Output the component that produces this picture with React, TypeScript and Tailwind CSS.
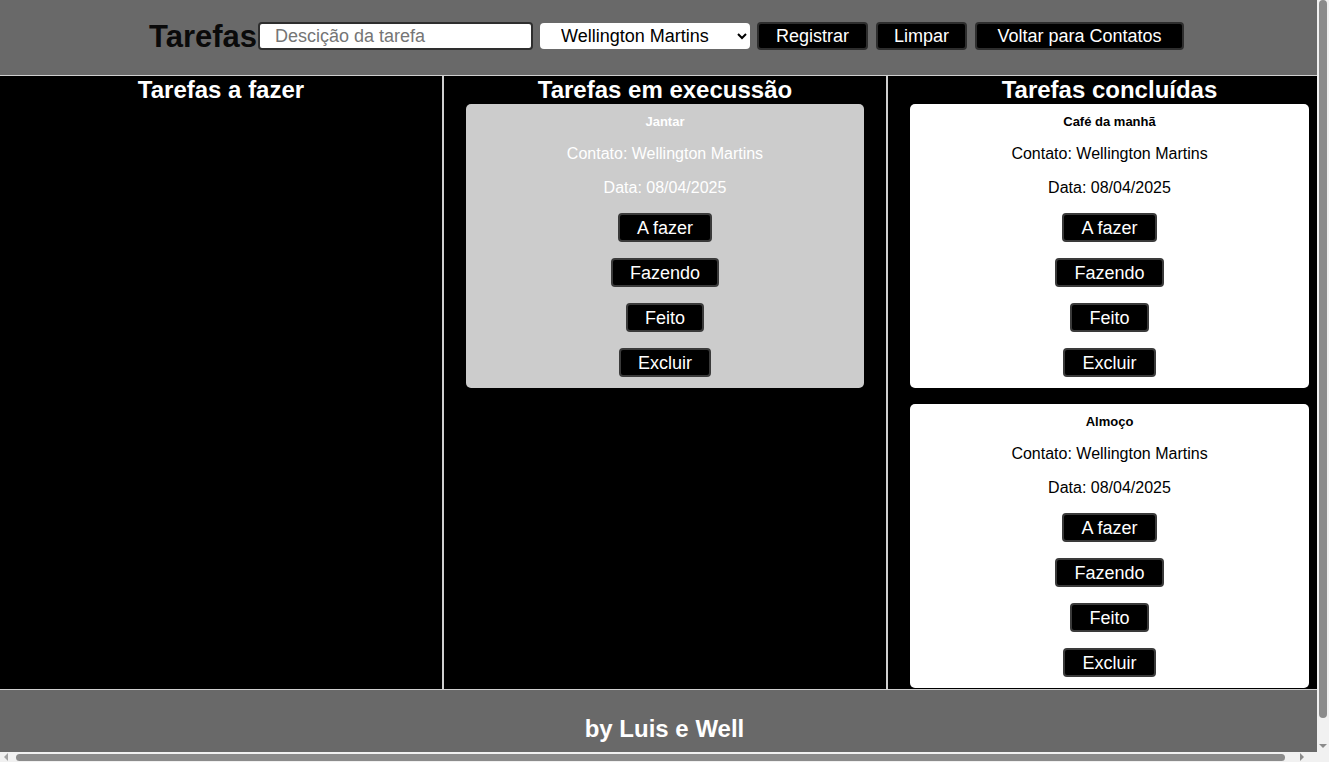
import React from "react";

type Task = { title: string; contato: string; data: string };

const font = { fontFamily: '"Liberation Sans", Arial, sans-serif' };

function TaskButton({ label }: { label: string }) {
  return (
    <button className="h-[29px] rounded-[4px] border-2 border-[#3a3a3a] bg-black px-[17px] text-[18px] leading-none text-white">
      {label}
    </button>
  );
}

function Card({ task, variant }: { task: Task; variant: "gray" | "white" }) {
  const cls =
    variant === "gray"
      ? "bg-[#cccccc] text-white"
      : "bg-white text-black";
  return (
    <div className={`mx-auto flex w-[90%] flex-col items-center rounded-[5px] pt-[10px] pb-[11px] ${cls}`}>
      <h3 className="text-[13px] font-bold leading-[15px]">{task.title}</h3>
      <p className="mt-4 text-[16px] leading-[18px]">Contato: {task.contato}</p>
      <p className="mt-4 text-[16px] leading-[18px]">Data: {task.data}</p>
      <div className="mt-4 flex flex-col items-center gap-4">
        <TaskButton label="A fazer" />
        <TaskButton label="Fazendo" />
        <TaskButton label="Feito" />
        <TaskButton label="Excluir" />
      </div>
    </div>
  );
}

function Column({ title, border, children }: { title: string; border: string; children?: React.ReactNode }) {
  return (
    <div className={`flex flex-col gap-4 border-[#cfcfcf] pb-[1px] ${border}`}>
      <h2 className="-mb-4 h-[28px] text-center text-[24px] font-bold leading-[28px] text-white">{title}</h2>
      {children}
    </div>
  );
}

function FakeScrollbars() {
  return (
    <>
      <div className="fixed top-0 right-0 flex h-[752px] w-[12px] flex-col items-center bg-[#f1f1f1]">
        <svg width="8" height="6" viewBox="0 0 8 6" className="mt-[3px] shrink-0">
          <path d="M0 5 L4 1 L8 5 Z" fill="#a3a3a3" />
        </svg>
        <div className="mt-[-9px] h-[718px] w-[8px] rounded-[4px] bg-[#8b8b8b]" />
        <div className="flex-1" />
        <svg width="8" height="6" viewBox="0 0 8 6" className="mb-[3px] shrink-0">
          <path d="M0 1 L4 5 L8 1 Z" fill="#8b8b8b" />
        </svg>
      </div>
      <div className="fixed bottom-0 left-0 flex h-[10px] w-[1317px] items-center bg-[#f1f1f1]">
        <svg width="6" height="8" viewBox="0 0 6 8" className="ml-[3px] shrink-0">
          <path d="M5 0 L1 4 L5 8 Z" fill="#a3a3a3" />
        </svg>
        <div className="ml-[7px] h-[7px] w-[1269px] rounded-[4px] bg-[#8b8b8b]" />
        <div className="flex-1" />
        <svg width="6" height="8" viewBox="0 0 6 8" className="mr-[12px] shrink-0">
          <path d="M1 0 L5 4 L1 8 Z" fill="#8b8b8b" />
        </svg>
      </div>
      <div className="fixed right-0 bottom-0 h-[10px] w-[12px] bg-[#f1f1f1]" />
    </>
  );
}

export default function App() {
  const execucao: Task[] = [{ title: "Jantar", contato: "Wellington Martins", data: "08/04/2025" }];
  const concluidas: Task[] = [
    { title: "Café da manhã", contato: "Wellington Martins", data: "08/04/2025" },
    { title: "Almoço", contato: "Wellington Martins", data: "08/04/2025" },
  ];
  return (
    <div className="w-[1331px] bg-black" style={font}>
      <header className="flex h-[76px] items-center justify-center border-b border-[#cfcfcf] bg-[#696969] pl-[2px] pb-[3px]">
        <h1 className="mr-[1px] text-[31px] font-bold leading-none text-[#0a0a0a]">Tarefas</h1>
        <input
          className="h-[28px] w-[275px] rounded-[4px] border-2 border-[#2e2e2e] bg-white px-[15px] text-[18px] text-black outline-none placeholder:text-[#757575]"
          placeholder="Descição da tarefa"
        />
        <select
          className="ml-[7px] h-[26px] w-[210px] rounded-[4px] border-0 bg-white pl-[17px] pr-[4px] text-[18px] text-black"
          defaultValue="wm"
        >
          <option value="wm">Wellington Martins</option>
        </select>
        <button className="ml-[7px] h-[28px] w-[111px] rounded-[4px] border-2 border-[#2e2e2e] bg-black text-[18px] leading-none text-white">
          Registrar
        </button>
        <button className="ml-[8px] h-[28px] w-[91px] rounded-[4px] border-2 border-[#2e2e2e] bg-black text-[18px] leading-none text-white">
          Limpar
        </button>
        <button className="ml-[8px] h-[28px] w-[209px] rounded-[4px] border-2 border-[#2e2e2e] bg-black text-[18px] leading-none text-white">
          Voltar para Contatos
        </button>
      </header>
      <main className="grid grid-cols-[443px_444px_444px] bg-black">
        <Column title="Tarefas a fazer" border="border-r" />
        <Column title="Tarefas em execussão" border="border-x">
          {execucao.map((t) => (
            <Card key={t.title} task={t} variant="gray" />
          ))}
        </Column>
        <Column title="Tarefas concluídas" border="border-l">
          {concluidas.map((t) => (
            <Card key={t.title} task={t} variant="white" />
          ))}
        </Column>
      </main>
      <footer className="h-[87px] border-t border-[#cfcfcf] bg-[#696969] pt-[25px] pr-[2px] text-center">
        <h2 className="text-[24px] font-bold leading-[28px] text-white">by Luis e Well</h2>
      </footer>
      <FakeScrollbars />
    </div>
  );
}
